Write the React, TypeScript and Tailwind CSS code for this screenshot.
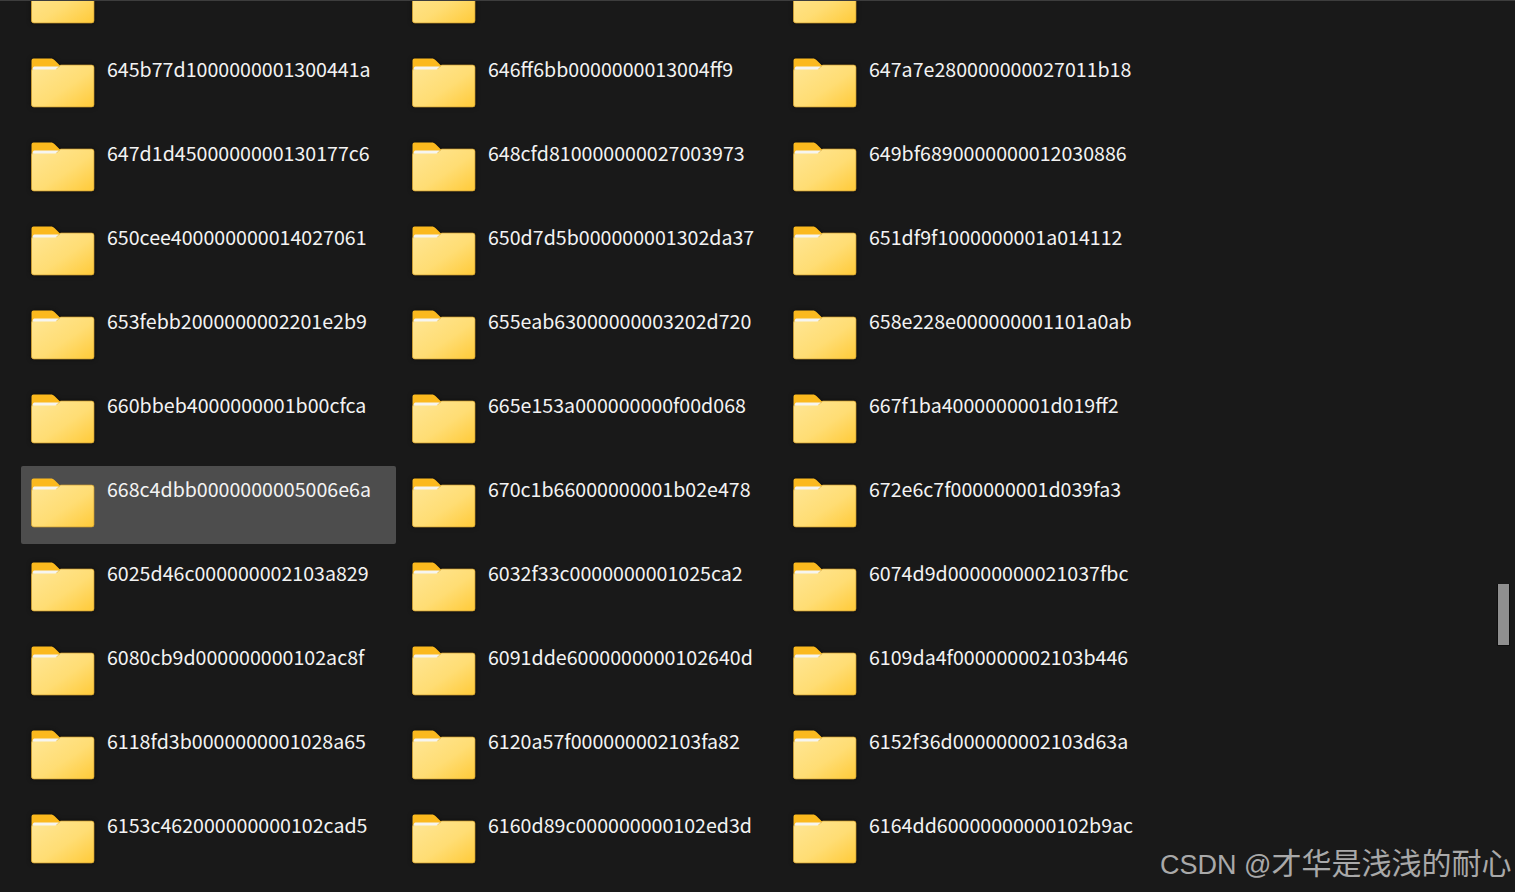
const folders: string[][] = [
  ["", "", ""],
  ["645b77d1000000001300441a", "646ff6bb0000000013004ff9", "647a7e280000000027011b18"],
  ["647d1d4500000000130177c6", "648cfd810000000027003973", "649bf6890000000012030886"],
  ["650cee400000000014027061", "650d7d5b000000001302da37", "651df9f1000000001a014112"],
  ["653febb2000000002201e2b9", "655eab63000000003202d720", "658e228e000000001101a0ab"],
  ["660bbeb4000000001b00cfca", "665e153a000000000f00d068", "667f1ba4000000001d019ff2"],
  ["668c4dbb0000000005006e6a", "670c1b66000000001b02e478", "672e6c7f000000001d039fa3"],
  ["6025d46c000000002103a829", "6032f33c0000000001025ca2", "6074d9d00000000021037fbc"],
  ["6080cb9d000000000102ac8f", "6091dde6000000000102640d", "6109da4f000000002103b446"],
  ["6118fd3b0000000001028a65", "6120a57f000000002103fa82", "6152f36d000000002103d63a"],
  ["6153c462000000000102cad5", "6160d89c000000000102ed3d", "6164dd60000000000102b9ac"],
];

function FolderIcon({ selected }: { selected: boolean }) {
  return (
    <svg
      width="64"
      height="50"
      viewBox="0 0 64 50"
      className={`shrink-0 ${selected ? "" : "drop-shadow-[0_0_2px_#0b0b0b]"}`}
    >
      <defs>
        <linearGradient id="folderFront" x1="0" y1="0" x2="1" y2="1">
          <stop offset="0" stopColor="#ffe695" />
          <stop offset="0.55" stopColor="#ffdd74" />
          <stop offset="1" stopColor="#ffca38" />
        </linearGradient>
      </defs>
      <path
        d="M2.500 0.500H19.500c2 0 3 .6 4.200 1.800L28.500 7H60.500a2.500 2.500 0 0 1 2.500 2.500V46.500a2.500 2.500 0 0 1-2.500 2.500H3a2.500 2.500 0 0 1-2.500-2.500V2.500a2 2 0 0 1 2-2z"
        fill="#fbb91e"
      />
      <path
        d="M3 10.500H24c1.500 0 2.500-.5 3.500-1.500L29.500 7H60.500a2.500 2.500 0 0 1 2.500 2.500V46.500a2.500 2.500 0 0 1-2.500 2.500H3a2.500 2.500 0 0 1-2.500-2.500V13A2.500 2.500 0 0 1 3 10.500z"
        fill="url(#folderFront)"
        stroke="#c9992f"
        strokeWidth="0.7"
      />
      <path d="M1.500 11.500c0-1.500.800-3 2-3H28L24.500 11.500H1.500z" fill="#f6f5f0" />
    </svg>
  );
}

function FolderItem({ name }: { name: string }) {
  const selected = name.startsWith("668c4dbb");
  return (
    <div
      className={`flex h-[78px] gap-[12px] pl-[10px] pt-[12px] rounded-[2px] ${
        selected ? "bg-[#4d4d4d]" : ""
      }`}
    >
      <FolderIcon selected={selected} />
      <span className="text-[19.600px] leading-[24px] -mt-[1px] text-[#f3f3f3] whitespace-nowrap">
        {name}
      </span>
    </div>
  );
}

export default function App() {
  return (
    <div className="relative h-[892px] w-[1515px] overflow-hidden bg-[#191919] font-['Noto_Sans_CJK_SC','Noto_Sans',sans-serif]">
      <div className="grid grid-cols-[375px_375px_375px] auto-rows-[78px] gap-x-[6px] gap-y-[6px] pl-[21px] -mt-[38px]">
        {folders.flat().map((name, i) => (
          <FolderItem key={i} name={name} />
        ))}
      </div>
      <div className="absolute left-0 top-0 h-px w-full bg-[#3d3d3d]" />
      <div className="absolute left-[1497px] top-[584px] h-[62px] w-[13px] border-l border-r border-b border-[#0f0f0f] bg-[#8f8f8f]" />
      <div className="absolute left-[1160px] top-[845px] whitespace-nowrap text-[27px] leading-[38px] text-[#a9a9a9] font-['Liberation_Sans','Noto_Sans_CJK_SC',sans-serif]">
        CSDN @<span className="text-[30px]">才华是浅浅的耐心</span>
      </div>
    </div>
  );
}
